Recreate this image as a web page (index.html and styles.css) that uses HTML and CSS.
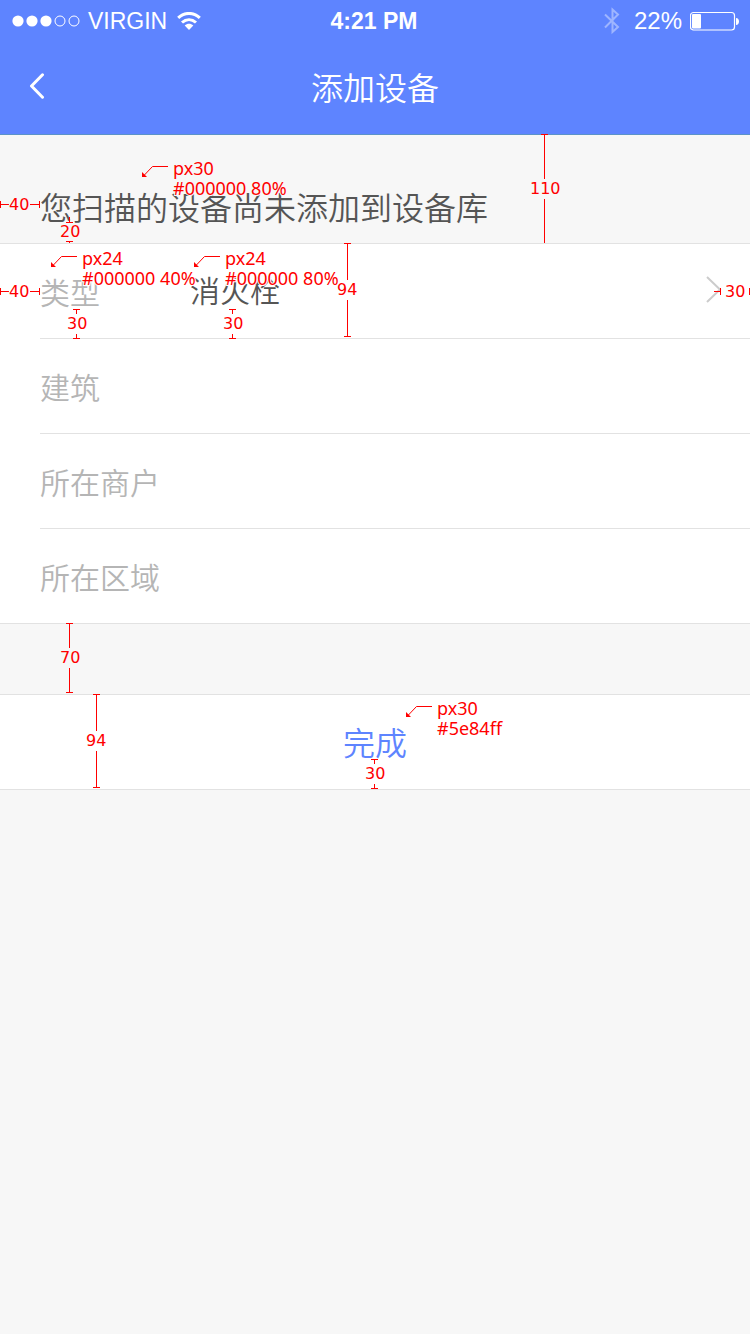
FILE: index.html
```html
<!DOCTYPE html>
<html lang="zh-CN">
<head>
<meta charset="utf-8">
<meta name="viewport" content="width=device-width, initial-scale=1">
<title>添加设备</title>
<link rel="stylesheet" href="styles.css">
</head>
<body>
<header class="header">
  <div class="status">
    <div class="status-side">
      <svg class="signal" width="68" height="12" viewBox="0 0 68 12" aria-hidden="true">
        <g fill="#fff"><circle cx="6" cy="6" r="5.6"/><circle cx="20" cy="6" r="5.6"/><circle cx="34" cy="6" r="5.6"/></g>
        <g fill="none" stroke="#fff"><circle cx="48" cy="6" r="5"/><circle cx="62" cy="6" r="5"/></g>
      </svg>
      <span class="carrier">VIRGIN</span>
      <svg width="24" height="18" viewBox="0 0 24 18" aria-hidden="true">
        <g fill="none" stroke="#fff" stroke-width="3"><path d="M1.2 5.900C7.4-.1 16.6-.1 22.8 5.900"/><path d="M5 10.500c4.2-3.8 9.800-3.800 14 0"/></g>
        <path fill="#fff" d="M7.700 13.500c2.600-2.200 6-2.200 8.600 0L12 18z"/>
      </svg>
    </div>
    <time class="clock">4:21 PM</time>
    <div class="status-side status-right">
      <svg class="bluetooth" width="16" height="28" viewBox="0 0 16 28" aria-hidden="true">
        <path fill="none" stroke="#fff" stroke-width="2" d="M1 7.500 14 20 8.500 25V2.500L14 7.500 1 20.500"/>
      </svg>
      <span class="percent">22%</span>
      <svg width="49" height="20" viewBox="0 0 49 20" aria-hidden="true">
        <rect x=".5" y="1.500" width="44" height="17.500" rx="3" fill="none" stroke="#fff" stroke-width="1.200"/>
        <rect x="2" y="3" width="9" height="14.500" rx="1" fill="#fff"/>
        <path fill="#fff" d="M46 7c4 0 4 7 0 7z"/>
      </svg>
    </div>
  </div>
  <nav class="navbar">
    <button class="back" type="button" aria-label="返回">
      <svg width="16" height="26" viewBox="0 0 16 26" aria-hidden="true"><path fill="none" stroke="#fff" stroke-width="3" stroke-linecap="round" stroke-linejoin="round" d="M13.500 1.800 2.500 13l11 11.200"/></svg>
    </button>
    <h1 class="title">添加设备</h1>
  </nav>
</header>

<main>
  <section class="intro">
    <p class="message">您扫描的设备尚未添加到设备库</p>
    <svg class="marks marks-tint" width="600" height="108">
      <path d="M0.500 66v7M0 69.500h9M30 69.500h10M39.500 66v7M66 87.500h7M69.500 82v6M66 106.500h7M69.500 106v7M541 -.5h7M544.500 0v44M544.500 64v44M541 108.500h7M143 41.500l9.500-10H168"/>
      <path class="tip" d="M142 42v-5l5 5z"/>
      <g class="size"><text x="9" y="75">40</text><text x="60" y="102">20</text><text x="530" y="59">110</text></g>
      <g class="spec"><text x="173" y="40">px30</text><text x="173" y="60">#000000 80%</text></g>
    </svg>
  </section>

  <form>
    <div class="card card-list">
      <button class="row" type="button">
        <span class="label">类型</span>
        <span class="value">消火栓</span>
        <svg class="chevron" width="16" height="28" viewBox="0 0 16 28" aria-hidden="true"><path fill="none" stroke="#ccc" stroke-width="2" d="M1 1l13 12.500L1 26"/></svg>
      </button>
      <div class="row"><label class="label" for="building">建筑</label><input class="field" id="building" type="text"></div>
      <div class="row"><label class="label" for="merchant">所在商户</label><input class="field" id="merchant" type="text"></div>
      <div class="row"><label class="label" for="area">所在区域</label><input class="field" id="area" type="text"></div>
      <svg class="marks" width="400" height="95">
        <path d="M0.500 44v7M0 47.500h9M30 47.500h10M39.500 44v7M73 65.500h7M76.500 65v5M76.500 90v4M73 94.500h7M229 65.500h7M232.500 65v5M232.500 90v4M229 94.500h7M344 -.5h7M347.500 0v36M347.500 56v36M344 92.500h7M52 22.500l9.500-10H77M195 22.500l9.500-10H220"/>
        <path class="tip" d="M51 23v-5l5 5zM194 23v-5l5 5z"/>
        <g class="size"><text x="9" y="53">40</text><text x="67" y="85">30</text><text x="223" y="85">30</text><text x="337" y="51">94</text></g>
        <g class="spec"><text x="82" y="21">px24</text><text x="82" y="41">#000000 40%</text><text x="225" y="21">px24</text><text x="225" y="41">#000000 80%</text></g>
      </svg>
      <svg class="marks marks-right" width="40" height="95">
        <path d="M4 47.500h6M10.500 44v7M39.500 44v7"/>
        <g class="size"><text x="15" y="53">30</text></g>
      </svg>
    </div>

    <div class="gap">
      <svg class="marks marks-tint" width="100" height="70">
        <path d="M66 -.5h7M69.500 0v24M69.500 44v25M66 68.500h7"/>
        <g class="size"><text x="60" y="39">70</text></g>
      </svg>
    </div>

    <div class="card">
      <button class="submit" type="submit">完成</button>
      <svg class="marks" width="120" height="94">
        <path d="M93 -.5h7M96.500 0v36M96.500 56v36M93 92.500h7"/>
        <g class="size"><text x="86" y="51">94</text></g>
      </svg>
      <svg class="marks marks-center" width="150" height="94">
        <path d="M-4 64.500h7M-.5 64v5M-.5 89v4M-4 93.500h7M32 21.500l9.500-10H57"/>
        <path class="tip" d="M31 22v-5l5 5z"/>
        <g class="size"><text x="-10" y="84">30</text></g>
        <g class="spec"><text x="62" y="20">px30</text><text x="62" y="40">#5e84ff</text></g>
      </svg>
    </div>
  </form>
</main>
</body>
</html>
```
FILE: styles.css
```css
* { box-sizing: border-box; }

body {
  margin: 0;
  min-height: 100vh;
  background: #f7f7f7;
  color: #555;
  font-family: "Noto Sans CJK SC DemiLight", "Noto Sans CJK SC", sans-serif;
  font-weight: 350;
}

button, input {
  margin: 0;
  padding: 0;
  border: 0;
  background: none;
  color: inherit;
  font: inherit;
}

svg { display: block; flex: none; }

.header {
  background: #5e84ff;
  border-bottom: 1px solid #5b93c8;
  color: #fff;
}

.status {
  display: grid;
  grid-template-columns: 1fr auto 1fr;
  align-items: center;
  height: 40px;
  padding: 0 11px 0 12px;
  font: 23px/40px "Liberation Sans", Arial, sans-serif;
}

.status-side { display: flex; align-items: center; }
.status-right { justify-content: flex-end; }
.carrier { margin: 0 10px 0 8px; padding-top: 1px; }
.clock { padding-right: 3px; font-weight: 700; }
.bluetooth { opacity: 0.4; }
.percent { margin: 0 8px 0 14px; font-size: 24px; }

.navbar {
  display: grid;
  grid-template-columns: 1fr auto 1fr;
  align-items: center;
  height: 94px;
}

.back {
  justify-self: start;
  padding: 0 29px 2px;
}

.title {
  margin: 0;
  padding-bottom: 2px;
  font-size: 32px;
  font-weight: 350;
  line-height: 48px;
}

.intro {
  position: relative;
  padding: 47px 40px 13px;
}

.message {
  margin: 0;
  font-size: 32px;
  line-height: 48px;
}

.card {
  position: relative;
  background: #fff;
  border-top: 1px solid #e2e2e2;
  border-bottom: 1px solid #e2e2e2;
}

.row {
  display: flex;
  align-items: center;
  width: calc(100% - 40px);
  height: 94px;
  margin-left: 40px;
  padding-right: 28px;
  font-size: 30px;
  line-height: 44px;
  text-align: left;
}

.row + .row {
  height: 95px;
  border-top: 1px solid #e2e2e2;
}

.label { width: 150px; color: #b5b5b5; }
.value { flex: 1; padding-bottom: 4px; }
.chevron { margin-bottom: 2px; }
.field { flex: 1; min-width: 0; outline: none; }

.gap { position: relative; height: 70px; }

.submit {
  display: block;
  width: 100%;
  height: 94px;
  padding-bottom: 2px;
  color: #5e84ff;
  font-size: 32px;
}

/* Measurement callouts laid over the screen */
.marks {
  position: absolute;
  top: 0;
  left: 0;
  overflow: visible;
  pointer-events: none;
  fill: none;
  stroke: #f00;
  color: #fff;
}

.marks-tint { color: #f7f7f7; }
.marks-right { left: auto; right: 0; }
.marks-center { left: 50%; }
.tip { fill: #f00; stroke: none; }

.size, .spec {
  fill: #f00;
  stroke: currentColor;
  stroke-width: 2px;
  paint-order: stroke;
}

.size { font: 16px "DejaVu Sans", Verdana, sans-serif; }
.spec { font: 18px "Noto Sans", sans-serif; }
```
